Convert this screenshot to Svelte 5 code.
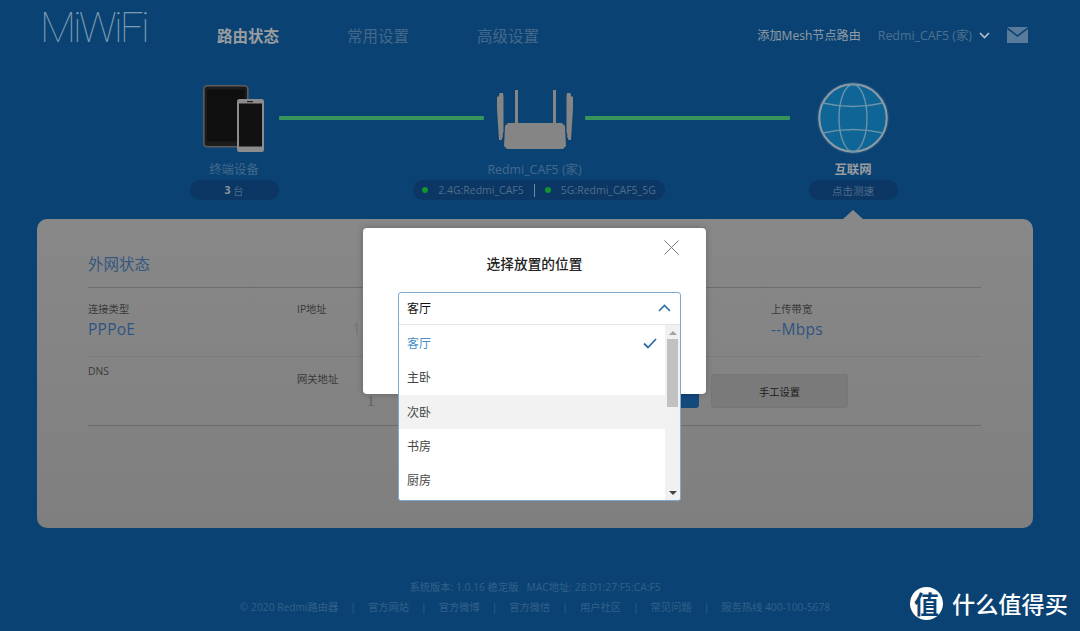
<script>
  const cols = [
    { label: '连接类型', value: 'PPPoE' },
    { label: 'IP地址', value: '1(', faint: true },
    { label: '下载带宽', value: '--Mbps' },
    { label: '上传带宽', value: '--Mbps' }
  ];
  const options = ['客厅', '主卧', '次卧', '书房', '厨房'];
  const links = ['官方网站', '官方微博', '官方微信', '用户社区', '常见问题'];
</script>

<div class="page">
  <header class="header">
    <div class="logo">MiWiFi</div>
    <nav class="nav">
      <span class="active">路由状态</span>
      <span>常用设置</span>
      <span>高级设置</span>
    </nav>
    <div class="right">
      <span class="mesh">添加Mesh节点路由</span>
      <span class="name">Redmi_CAF5 (家)</span>
      <svg class="chev" viewBox="0 0 11 7" width="11" height="7"><path d="M1 1l4.5 4.5L10 1" fill="none" stroke="#b4bfca" stroke-width="1.7"/></svg>
      <svg class="mail" viewBox="0 0 21 16" width="21" height="16"><path d="M0 0h21L10.5 8z" fill="#587a9b"/><path d="M0 2l10.5 8L21 2v14H0z" fill="#587a9b"/></svg>
    </div>
  </header>

  <section class="topo">
    <svg class="icon" viewBox="0 0 61 67" width="61" height="67">
      <rect x=".8" y=".8" width="44" height="61" rx="3.5" fill="#1c1c1c" stroke="#5c5c5c" stroke-width="1.6"/>
      <rect x="4" y="4.5" width="38" height="52" fill="#0f0f0f"/>
      <rect x="34" y="14" width="27" height="53" rx="2.5" fill="#8c8c8c"/>
      <rect x="36" y="18.5" width="23" height="43" fill="#111"/>
      <rect x="44" y="16" width="6" height="1.2" fill="#222"/>
    </svg>
    <div class="link"></div>
    <svg class="router" viewBox="0 0 76 62" width="76" height="62">
      <path d="M0 8l2-1 .5-3H6l.5 4v38l-2 5H2L0 20z" fill="#858585"/>
      <path d="M76 8l-2-1-.5-3H70l-.5 4v38l2 5H74l2-31z" fill="#858585"/>
      <rect x="18" y="1" width="3" height="34" fill="#858585"/>
      <rect x="56" y="1" width="3" height="34" fill="#858585"/>
      <path d="M11 34h54l3 3 1 20-3 3H10l-3-3 1-20z" fill="#858585"/>
      <path d="M7 43q-2 3 0 6M69 43q2 3 0 6" fill="none" stroke="#143a63" stroke-width="1"/>
    </svg>
    <div class="link"></div>
    <svg class="globe" viewBox="0 0 70 70" width="70" height="70">
      <circle cx="35" cy="35" r="33.7" fill="#0f6595" stroke="#8e9ca6" stroke-width="2"/>
      <ellipse cx="35" cy="35" rx="14" ry="33.5" fill="none" stroke="#6b93ab" stroke-width="1.4"/>
      <path d="M5 20q30 7 60 0M5 50q30-7 60 0" fill="none" stroke="#6b93ab" stroke-width="1.4"/>
    </svg>

    <div class="label first">终端设备</div>
    <div class="label mid">Redmi_CAF5 (家)</div>
    <div class="label last"><b>互联网</b></div>

    <div class="pill first"><b>3</b>&nbsp;台</div>
    <div class="pill mid wide">
      <i class="dot"></i><span>2.4G:Redmi_CAF5</span><em class="bar"></em><i class="dot"></i><span>5G:Redmi_CAF5_5G</span>
    </div>
    <div class="pill last">点击测速</div>
  </section>

  <main class="panel">
    <div class="arrow"></div>
    <h2 class="title">外网状态</h2>
    <div class="row dotted">
      {#each cols as c}
        <div class="cell">
          <div class="k">{c.label}</div>
          <div class="v" class:faint={c.faint}>{c.value}</div>
        </div>
      {/each}
    </div>
    <div class="row solid">
      <div class="cell dns"><div class="k">DNS</div></div>
      <div class="cell gw">
        <div class="k">网关地址</div>
        <div class="gwv">1</div>
      </div>
      <div class="actions">
        <button class="btn primary">一键测速</button>
        <button class="btn">手工设置</button>
      </div>
    </div>
  </main>

  <footer class="footer">
    <div class="ver">系统版本: 1.0.16 稳定版&nbsp;&nbsp; MAC地址: 28:D1:27:F5:CA:F5</div>
    <div class="flinks">
      <span>© 2020 Redmi路由器</span>
      {#each links as l}
        <span>|</span><span>{l}</span>
      {/each}
      <span>|</span><span>服务热线 400-100-5678</span>
    </div>
  </footer>

  <div class="modal">
    <svg class="close" viewBox="0 0 15 15" width="15" height="15"><path d="M.5.5l14 14M14.5.5l-14 14" stroke="#777" stroke-width="1" fill="none"/></svg>
    <h3>选择放置的位置</h3>
    <div class="select">
      <div class="current">
        <span>客厅</span>
        <svg viewBox="0 0 13 8" width="13" height="8"><path d="M1 7l5.5-5.5L12 7" fill="none" stroke="#2f6ea5" stroke-width="1.6"/></svg>
      </div>
      <div class="dropdown">
        <ul>
          {#each options as o, i}
            <li class:sel={i === 0} class:hover={i === 2}>
              {o}
              {#if i === 0}
                <svg viewBox="0 0 14 11" width="14" height="11"><path d="M1 5.5l4 4L13 1" fill="none" stroke="#2f6ea5" stroke-width="1.8"/></svg>
              {/if}
            </li>
          {/each}
        </ul>
        <div class="scroll">
          <svg class="up" viewBox="0 0 8 4" width="8" height="4"><path d="M4 0l4 4H0z" fill="#a3a3a3"/></svg>
          <div class="thumb"></div>
          <svg class="down" viewBox="0 0 8 4" width="8" height="4"><path d="M4 4L0 0h8z" fill="#444"/></svg>
        </div>
      </div>
    </div>
  </div>

  <div class="mark">
    <span class="badge">值</span>
    <span class="brand">什么值得买</span>
  </div>
</div>

<style>
  :global(body) { margin: 0; }
  * { box-sizing: border-box; }
  .page {
    position: relative;
    width: 1080px;
    height: 631px;
    overflow: hidden;
    background: #0a4373;
    font-family: "Open Sans", "Noto Sans CJK SC", sans-serif;
    color: #fff;
  }
  .header {
    height: 84px;
    display: flex;
    align-items: flex-start;
    padding-left: 40px;
  }
  .logo {
    width: 97px;
    margin-top: 4px;
    font-family: Roboto, sans-serif;
    font-weight: 100;
    font-size: 42px;
    line-height: 48px;
    letter-spacing: -2.9px;
    color: #7f9bb2;
    white-space: nowrap;
  }
  .nav {
    display: flex;
    gap: 68px;
    margin-left: 80px;
    margin-top: 25px;
    font-size: 15.5px;
    line-height: 22px;
    color: #46688a;
  }
  .nav span { width: 62px; white-space: nowrap; }
  .nav .active { color: #9a9da0; font-weight: 700; }
  .right {
    margin-left: auto;
    margin-top: 26px;
    padding-right: 52px;
    display: flex;
    align-items: center;
    height: 17px;
    font-size: 12.1px;
    white-space: nowrap;
  }
  .mesh { color: #939ca5; }
  .name { margin-left: 17px; font-size: 12.4px; color: #4e7090; }
  .chev { margin-left: 7px; margin-top: 1px; }
  .mail { margin-left: 17px; }

  .topo {
    display: grid;
    grid-template-columns: 90px 205px 101px 205px 126px;
    grid-template-rows: 68px 28px 20px;
    margin-left: 189px;
  }
  .icon { justify-self: center; align-self: start; margin: 1px 0 0 -1px; }
  .link { height: 4px; align-self: center; background: #37945a; border-radius: 1px; }
  .router { justify-self: center; align-self: center; margin-top: 4px; }
  .globe { justify-self: center; align-self: center; filter: drop-shadow(0 0 1px rgba(200, 200, 200, .4)); }
  .label {
    grid-row: 2;
    justify-self: center;
    align-self: center;
    margin-top: 8px;
    font-size: 12.4px;
    line-height: 18px;
    color: #44698c;
    white-space: nowrap;
  }
  .label b { color: #9a9da0; }
  .first { grid-column: 1; }
  .mid { grid-column: 2 / 5; }
  .last { grid-column: 5; }
  .pill {
    grid-row: 3;
    height: 20px;
    width: 89px;
    justify-self: center;
    display: flex;
    align-items: center;
    justify-content: center;
    border-radius: 10px;
    background: #0c3663;
    font-size: 10.5px;
    color: #4f6e8c;
    white-space: nowrap;
  }
  .pill b { color: #8a949e; }
  .pill.wide { width: 252px; margin-left: 9px; }
  .dot { width: 6px; height: 6px; border-radius: 50%; background: #12952f; margin-right: 10px; flex: none; }
  .bar { width: 1px; height: 13px; background: #6f8aa3; margin: 0 10px; }

  .panel {
    position: relative;
    width: 996px;
    height: 309px;
    margin: 19px 0 0 37px;
    padding: 0 52px 0 51px;
    background: linear-gradient(#888, #7f7f7f);
    border-radius: 10px;
    color: #333;
  }
  .arrow {
    position: absolute;
    left: 806px;
    top: -9px;
    width: 20px;
    height: 9px;
    background: #888;
    clip-path: polygon(50% 0, 100% 100%, 0 100%);
  }
  .title {
    height: 69px;
    margin: 0;
    padding-top: 34px;
    font-size: 15.5px;
    line-height: 22px;
    font-weight: 400;
    color: #34577f;
    border-bottom: 1px solid #6e6e6e;
  }
  .row {
    display: grid;
    grid-template-columns: 209px 237px 237px 1fr;
    height: 69px;
  }
  .dotted { border-bottom: 1px dotted #737373; padding-top: 14px; }
  .solid { border-bottom: 1px solid #6c6c6c; position: relative; }
  .k { font-size: 10.3px; line-height: 15px; color: #3a3a3a; }
  .v { font-size: 15.5px; line-height: 21px; margin-top: 2px; letter-spacing: .25px; color: #2f5483; }
  .v.faint { color: #737373; margin-left: 55px; letter-spacing: 2px; }
  .dns { padding-top: 7px; }
  .gw { padding-top: 15px; }
  .gwv {
    margin-left: 70px;
    margin-top: 5px;
    font-family: "Liberation Serif", serif;
    font-size: 15px;
    line-height: 18px;
    color: #606060;
  }
  .actions {
    grid-column: 3 / 5;
    display: flex;
    gap: 12px;
    padding: 17px 0 0 28px;
  }
  .btn {
    width: 137px;
    height: 34px;
    border: 1px solid #767676;
    border-radius: 3px;
    background: #7a7a7a;
    font: inherit;
    font-size: 10.3px;
    color: #1c1c1c;
  }
  .btn.primary { background: #124a7c; border-color: #124a7c; color: #808080; }

  .footer {
    width: 1070px;
    margin-top: 49px;
    text-align: center;
    font-size: 10.3px;
    line-height: 20px;
    color: #33608a;
  }
  .flinks { display: flex; justify-content: center; gap: 12px; white-space: nowrap; font-size: 10.25px; }

  .modal {
    position: absolute;
    left: 363px;
    top: 228px;
    width: 343px;
    height: 166px;
    background: #fff;
    border-radius: 4px;
    box-shadow: 0 0 6px rgba(0, 0, 0, .25);
    color: #333;
  }
  .close { position: absolute; right: 27px; top: 12px; }
  .modal h3 {
    margin: 0;
    padding-top: 26px;
    text-align: center;
    font-size: 13.7px;
    line-height: 20px;
    font-weight: 500;
    color: #222;
  }
  .select {
    position: absolute;
    left: 35px;
    top: 64px;
    width: 283px;
    height: 209px;
    background: #fff;
    border: 1px solid #7fa9cd;
    border-radius: 3px;
    font-size: 12px;
  }
  .current {
    height: 33px;
    margin-top: -1px;
    padding: 0 9px 0 8px;
    display: flex;
    align-items: center;
    justify-content: space-between;
    border-bottom: 1px solid #e4e4e4;
    color: #111;
  }
  .dropdown { display: flex; height: 175px; overflow: hidden; border-radius: 0 0 3px 3px; }
  ul { list-style: none; margin: 1px 0 0; padding: 0; flex: 1; }
  li {
    height: 34.3px;
    padding: 0 8px 0 8px;
    display: flex;
    align-items: center;
    justify-content: space-between;
    color: #444;
  }
  li.sel { color: #4a8fc9; }
  li.hover { background: #f2f2f2; }
  .scroll {
    width: 15px;
    flex: none;
    background: #f1f1f1;
    display: flex;
    flex-direction: column;
    align-items: center;
    position: relative;
  }
  .up { margin-top: 6px; }
  .thumb { width: 11px; height: 68px; margin-top: 4px; background: #c1c1c1; }
  .down { margin-top: auto; margin-bottom: 5px; }

  .mark {
    position: absolute;
    left: 910px;
    top: 587px;
    height: 33px;
    display: flex;
    align-items: center;
    gap: 9px;
    font-family: "Noto Sans CJK SC", sans-serif;
    white-space: nowrap;
  }
  .badge {
    width: 33px;
    height: 33px;
    border-radius: 50%;
    background: #fff;
    color: #0a4373;
    font-size: 25px;
    line-height: 33px;
    font-weight: 700;
    text-align: center;
  }
  .brand { font-size: 23.2px; line-height: 33px; color: #fff; font-weight: 500; }
</style>
